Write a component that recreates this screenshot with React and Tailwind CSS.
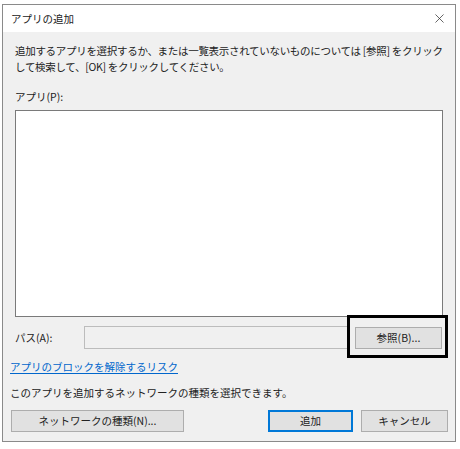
import { X } from 'lucide-react';

const font = { fontFamily: '"Noto Sans CJK JP", "Noto Sans", sans-serif' };

function Btn({ children, primary = false, className = '' }) {
  return (
    <div
      className={`flex items-center justify-center h-[22px] bg-[#e1e1e1] text-[10.5px] text-[#222] ${
        primary ? 'border-2 border-[#0078d7]' : 'border border-[#adadad]'
      } ${className}`}
    >
      {children}
    </div>
  );
}

export default function App() {
  return (
    <div className="relative w-[460px] h-[449px] bg-white pt-[4px] pl-[2px]" style={font}>
      <div className="w-[454px] h-[438px] border border-[#8a8a8a] flex flex-col">
        {/* title bar */}
        <div className="h-[27px] bg-white flex items-center justify-between pl-[8px] pr-[8px] shrink-0">
          <span className="text-[10.5px] text-[#222]">アプリの追加</span>
          <X size={15} strokeWidth={1.2} className="text-[#333]" />
        </div>

        {/* body */}
        <div className="flex-1 bg-[#f0f0f0] flex flex-col pl-[7px] pr-[7px]">
          <p className="mt-[11px] pl-[5px] text-[10.5px] leading-[16px] text-[#222] tracking-[-0.3px]">
            追加するアプリを選択するか、または一覧表示されていないものについては [参照] をクリック
            <br />
            して検索して、[OK] をクリックしてください。
          </p>

          <div className="mt-[14px] pl-[5px] text-[10.5px] leading-[16px] text-[#222]">アプリ(P):</div>

          <div className="mt-[5px] ml-[5px] w-[428px] h-[207px] bg-white border border-[#7a7a7a]"></div>

          <div className="mt-[9px] ml-[5px] flex items-center">
            <span className="w-[69px] text-[10.5px] text-[#222]">パス(A):</span>
            <div className="w-[265px] h-[23px] bg-[#f0f0f0] border border-[#bcbcbc]"></div>
            <Btn className="ml-[6px] w-[87px]">参照(B)...</Btn>
          </div>

          <a className="mt-[10px] text-[10.5px] leading-[16px] text-[#0066cc] underline underline-offset-2 self-start">
            アプリのブロックを解除するリスク
          </a>

          <div className="mt-[10px] text-[10.5px] leading-[16px] text-[#222]">
            このアプリを追加するネットワークの種類を選択できます。
          </div>

          <div className="mt-[9px] flex items-center">
            <Btn className="ml-[1px] w-[173px]">ネットワークの種類(N)...</Btn>
            <Btn primary className="ml-[84px] w-[85px]">追加</Btn>
            <Btn className="ml-[8px] w-[87px]">キャンセル</Btn>
          </div>
        </div>
      </div>

      {/* highlight */}
      <div className="absolute left-[347px] top-[315px] w-[101px] h-[43px] border-[3px] border-black"></div>
    </div>
  );
}
